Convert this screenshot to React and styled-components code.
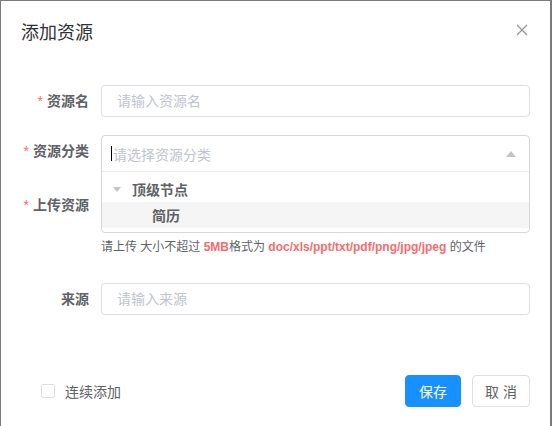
import React from "react";
import styled, { createGlobalStyle } from "styled-components";

const Global = createGlobalStyle`
  html, body { margin: 0; padding: 0; }
  body {
    background: #7a7a7a;
    font-family: "Liberation Sans", "Noto Sans CJK SC", sans-serif;
    overflow: hidden;
  }
  * { box-sizing: border-box; }
`;

const Dialog = styled.div`
  margin: 1px 2px 0 1px;
  width: 549px;
  height: 425px;
  background: #fff;
  display: flex;
  flex-direction: column;
`;

const Header = styled.div`
  display: flex;
  align-items: center;
  justify-content: space-between;
  padding: 20px 20px 10px 20px;
`;

const Title = styled.div`
  font-size: 18px;
  line-height: 24px;
  color: #303133;
`;

const CloseBtn = styled.button`
  border: 0;
  background: none;
  padding: 0;
  width: 14px;
  height: 14px;
  margin-top: -7px;
  margin-right: 1px;
  display: flex;
  align-items: center;
  justify-content: center;
  cursor: pointer;
`;

const Body = styled.div`
  padding: 30px 20px 0 20px;
  display: flex;
  flex-direction: column;
  flex: 1;
`;

const Row = styled.div`
  display: flex;
  align-items: flex-start;
  margin-bottom: ${(p) => p.$mb || 18}px;
  position: relative;
`;

const Label = styled.label`
  width: 80px;
  flex: none;
  padding-right: 12px;
  text-align: right;
  font-size: 14px;
  line-height: 32px;
  font-weight: 700;
  color: #606266;
  white-space: nowrap;
`;

const Star = styled.span`
  color: #f56c6c;
  font-weight: 400;
  margin-right: 4px;
`;

const Content = styled.div`
  flex: 1;
  min-width: 0;
  position: relative;
`;

const Input = styled.input`
  width: 100%;
  height: 32px;
  border: 1px solid #dcdfe6;
  border-radius: 4px;
  padding: 0 15px;
  font-size: 14px;
  font-family: inherit;
  color: #606266;
  outline: none;
  &::placeholder { color: #c0c4cc; }
`;

const SelectBox = styled.div`
  position: absolute;
  left: 0;
  right: 0;
  top: 0;
  z-index: 5;
  border: 1px solid #d7d7d7;
  border-radius: 4px;
  background: #fff;
`;

const SelectHead = styled.div`
  height: 36px;
  display: flex;
  align-items: center;
  padding: 0 10px 0 9px;
  border-bottom: 1px solid #ebebeb;
`;

const Caret = styled.span`
  width: 1px;
  height: 15px;
  background: #000;
  margin-right: 1px;
`;

const Placeholder = styled.span`
  flex: 1;
  font-size: 14px;
  color: #c0c4cc;
`;

const TreeList = styled.div`
  padding: 4px 0 4px 0;
`;

const TreeNode = styled.div`
  height: 26px;
  display: flex;
  align-items: center;
  padding-left: ${(p) => p.$indent}px;
  background: ${(p) => (p.$active ? "#f5f5f5" : "transparent")};
  font-size: 14px;
  font-weight: 700;
  color: #606266;
`;

const TreeArrow = styled.span`
  width: 0;
  height: 0;
  border-left: 4px solid transparent;
  border-right: 4px solid transparent;
  border-top: 5px solid #c0c4cc;
  margin-right: 11px;
`;

const UpArrow = styled.span`
  width: 0;
  height: 0;
  border-left: 5px solid transparent;
  border-right: 5px solid transparent;
  border-bottom: 6px solid #c0c4cc;
  margin-right: 3px;
`;

const SelectSpacer = styled.div`
  height: 36px;
`;

const UploadSlot = styled.div`
  height: 32px;
`;

const Hint = styled.div`
  margin-top: 16px;
  font-size: 12px;
  line-height: 20px;
  color: #606266;
  white-space: nowrap;
`;

const Red = styled.span`
  color: #f56c6c;
  font-weight: 700;
`;

const Footer = styled.div`
  margin-top: auto;
  padding: 0 20px 19px 40px;
  display: flex;
  align-items: center;
`;

const Check = styled.label`
  display: flex;
  align-items: center;
  gap: 10px;
  font-size: 14px;
  color: #606266;
  flex: 1;
`;

const Box = styled.span`
  width: 14px;
  height: 14px;
  border: 1px solid #dcdfe6;
  border-radius: 2px;
  background: #fff;
`;

const Button = styled.button`
  height: 32px;
  min-width: ${(p) => p.$w}px;
  margin-left: ${(p) => p.$ml || 0}px;
  border-radius: 4px;
  font-size: 14px;
  font-family: inherit;
  border: 1px solid ${(p) => (p.$primary ? "#1890ff" : "#dcdfe6")};
  background: ${(p) => (p.$primary ? "#1890ff" : "#fff")};
  color: ${(p) => (p.$primary ? "#fff" : "#606266")};
  padding: 0 12px;
  cursor: pointer;
`;

export default function App() {
  return (
    <>
      <Global />
      <Dialog>
        <Header>
          <Title>添加资源</Title>
          <CloseBtn aria-label="close">
            <svg width="12" height="12" viewBox="0 0 12 12">
              <path d="M1 1L11 11M11 1L1 11" stroke="#909399" strokeWidth="1.2" fill="none" />
            </svg>
          </CloseBtn>
        </Header>
        <Body>
          <Row>
            <Label><Star>*</Star>资源名</Label>
            <Content>
              <Input placeholder="请输入资源名" />
            </Content>
          </Row>
          <Row>
            <Label><Star>*</Star>资源分类</Label>
            <Content>
              <SelectSpacer />
              <SelectBox>
                <SelectHead>
                  <Caret />
                  <Placeholder>请选择资源分类</Placeholder>
                  <UpArrow />
                </SelectHead>
                <TreeList>
                  <TreeNode $indent={11}>
                    <TreeArrow />
                    顶级节点
                  </TreeNode>
                  <TreeNode $indent={50} $active>简历</TreeNode>
                </TreeList>
              </SelectBox>
            </Content>
          </Row>
          <Row $mb={26}>
            <Label><Star>*</Star>上传资源</Label>
            <Content>
              <UploadSlot />
              <Hint>
                请上传 大小不超过 <Red>5MB</Red>格式为 <Red>doc/xls/ppt/txt/pdf/png/jpg/jpeg</Red> 的文件
              </Hint>
            </Content>
          </Row>
          <Row>
            <Label>来源</Label>
            <Content>
              <Input placeholder="请输入来源" />
            </Content>
          </Row>
        </Body>
        <Footer>
          <Check>
            <Box />
            连续添加
          </Check>
          <Button $primary $w={56}>保存</Button>
          <Button $w={57} $ml={11}>取 消</Button>
        </Footer>
      </Dialog>
    </>
  );
}
